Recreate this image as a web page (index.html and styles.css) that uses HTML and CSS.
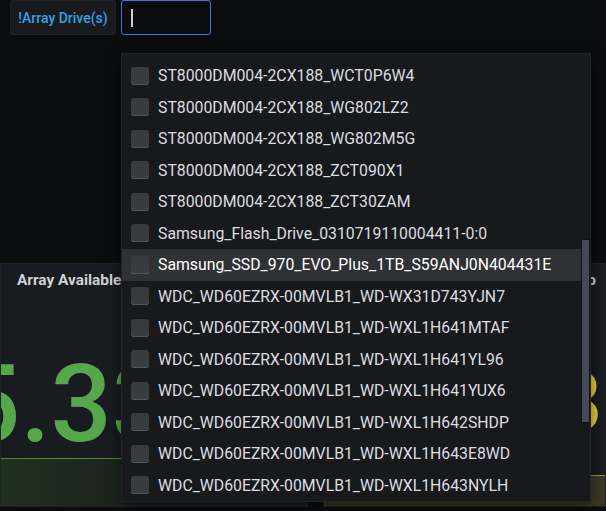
FILE: index.html
```html
<!DOCTYPE html>
<html lang="en">
  <head>
    <meta charset="UTF-8" />
    <meta name="viewport" content="width=device-width, initial-scale=1.0" />
    <title>Unraid Disks</title>
    <link rel="stylesheet" href="styles.css">
  </head>
  <body>
    <div class="submenu">
      <span class="submenu__label">!Array Drive(s)</span>
      <div class="submenu__input">
        <span class="submenu__caret"></span>
      </div>
    </div>

    <div class="dashboard">
      <div class="panel">
        <h2 class="panel__title">Array Available</h2>
        <div class="stat stat--green">5.33 TB</div>
        <div class="spark spark--green"></div>
      </div>
      <div class="panel panel--right">
        <h2 class="panel__title">Array Used Ratio</h2>
        <div class="stat stat--yellow">38</div>
        <div class="spark spark--yellow"></div>
      </div>
    </div>

    <div class="picker">
      <ul class="picker__list">
        <li class="option"><span class="option__box"></span>ST8000DM004-2CX188_WCT0NSNF</li>
        <li class="option"><span class="option__box"></span>ST8000DM004-2CX188_WCT0P6W4</li>
        <li class="option"><span class="option__box"></span>ST8000DM004-2CX188_WG802LZ2</li>
        <li class="option"><span class="option__box"></span>ST8000DM004-2CX188_WG802M5G</li>
        <li class="option"><span class="option__box"></span>ST8000DM004-2CX188_ZCT090X1</li>
        <li class="option"><span class="option__box"></span>ST8000DM004-2CX188_ZCT30ZAM</li>
        <li class="option"><span class="option__box"></span>Samsung_Flash_Drive_0310719110004411-0:0</li>
        <li class="option option--hover"><span class="option__box"></span>Samsung_SSD_970_EVO_Plus_1TB_S59ANJ0N404431E</li>
        <li class="option"><span class="option__box"></span>WDC_WD60EZRX-00MVLB1_WD-WX31D743YJN7</li>
        <li class="option"><span class="option__box"></span>WDC_WD60EZRX-00MVLB1_WD-WXL1H641MTAF</li>
        <li class="option"><span class="option__box"></span>WDC_WD60EZRX-00MVLB1_WD-WXL1H641YL96</li>
        <li class="option"><span class="option__box"></span>WDC_WD60EZRX-00MVLB1_WD-WXL1H641YUX6</li>
        <li class="option"><span class="option__box"></span>WDC_WD60EZRX-00MVLB1_WD-WXL1H642SHDP</li>
        <li class="option"><span class="option__box"></span>WDC_WD60EZRX-00MVLB1_WD-WXL1H643E8WD</li>
        <li class="option"><span class="option__box"></span>WDC_WD60EZRX-00MVLB1_WD-WXL1H643NYLH</li>
      </ul>
      <div class="picker__track">
        <div class="picker__thumb"></div>
      </div>
    </div>
  </body>
</html>
```

FILE: styles.css
```css
* {
  margin: 0;
  padding: 0;
  box-sizing: border-box;
}
body {
  width: 606px;
  height: 511px;
  overflow: hidden;
  position: relative;
  background-color: #0b0c0e;
  font-family: Roboto, "Liberation Sans", sans-serif;
  color: #d8d9da;
}

/* variable bar */
.submenu {
  display: flex;
  gap: 5px;
  height: 35px;
  padding-left: 10px;
}
.submenu__label {
  display: flex;
  align-items: center;
  justify-content: center;
  width: 106px;
  background-color: #181a1e;
  border: 1px solid #202226;
  border-radius: 3px;
  color: #33a2e5;
  font-size: 14px;
  font-weight: 500;
}
.submenu__input {
  display: flex;
  align-items: center;
  width: 90px;
  padding-left: 9px;
  border: 1px solid #3d78d8;
  border-radius: 3px;
  background-color: #0b0c0e;
}
.submenu__caret {
  width: 2px;
  height: 18px;
  background-color: #c7d0d9;
}

/* panels */
.dashboard {
  display: grid;
  grid-template-columns: 308px 1fr;
  column-gap: 15px;
  height: 244px;
  margin-top: 228px;
}
.panel {
  display: flex;
  flex-direction: column;
  overflow: hidden;
  background-color: #181b1f;
  border: 1px solid #202226;
}
.panel__title {
  padding: 8px 0 0 16px;
  font-size: 15.4px;
  line-height: 16px;
  font-weight: 700;
  color: #d0d1d4;
  white-space: nowrap;
}
.panel--right .panel__title {
  padding: 8px 9px 0 0;
  text-align: right;
}
.stat {
  font-size: 108px;
  line-height: 1;
  font-weight: 500;
  white-space: nowrap;
}
.stat--green {
  margin: 62px 0 0 -42px;
  color: #56a64b;
}
.stat--yellow {
  margin-top: 72px;
  padding-right: 3px;
  font-size: 83px;
  text-align: right;
  color: #dcc93a;
}
.spark {
  margin-top: auto;
}
.spark--green {
  height: 60px;
  border-top: 1px solid #4a8a40;
  background: linear-gradient(to right, #21301f, #1c221d 130px, #1c221d);
}
.spark--yellow {
  height: 31px;
  border-top: 1px solid #9e9432;
  background-color: #3a3822;
}

/* multi-select dropdown */
.picker {
  position: absolute;
  top: 53px;
  left: 121px;
  width: 470px;
  height: 449px;
  display: flex;
  background-color: #18191d;
  border: 1px solid #222327;
  box-shadow: 0 4px 12px rgba(0, 0, 0, 0.5);
}
.picker__list {
  flex: 1;
  display: flex;
  flex-direction: column;
  justify-content: flex-end;
  overflow: hidden;
  list-style: none;
}
.option {
  flex-shrink: 0;
  display: flex;
  align-items: center;
  gap: 9px;
  height: 31.5px;
  padding-left: 9px;
  font-size: 15.8px;
  white-space: nowrap;
  color: #dcdde0;
}
.option--hover {
  background-color: #303135;
  color: #fff;
}
.option__box {
  flex-shrink: 0;
  width: 18px;
  height: 18px;
  border-radius: 3px;
  background-color: #3a3b3f;
  box-shadow: inset 0 -1px 0 #54575f;
}
.picker__track {
  width: 9px;
}
.picker__thumb {
  height: 184px;
  margin-top: 185px;
  background-color: #474a56;
  border: 1px solid #111216;
}
```
